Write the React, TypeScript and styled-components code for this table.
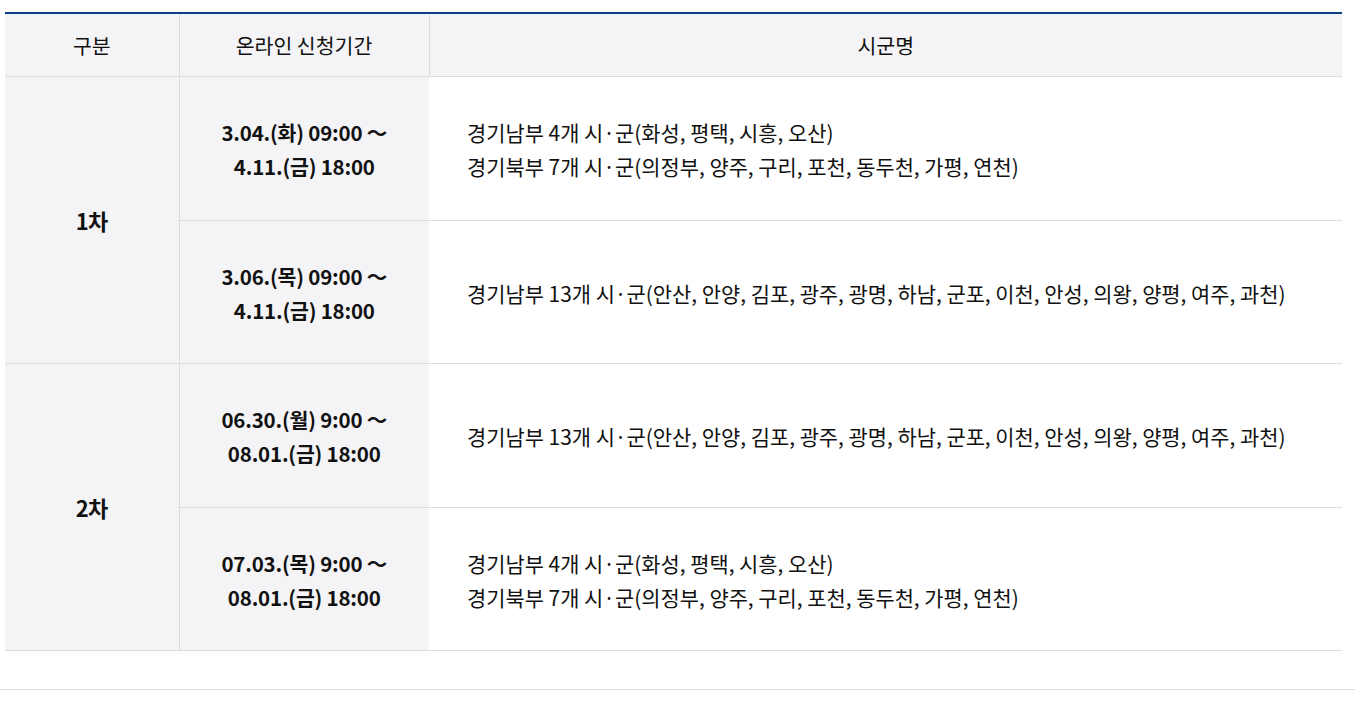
import React from 'react';
import styled, { createGlobalStyle } from 'styled-components';

type Period = {
  start: string;
  end: string;
  regions: string[];
};

type Round = {
  label: string;
  periods: Period[];
};

const SOUTH_4 = '경기남부 4개 시·군(화성, 평택, 시흥, 오산)';
const NORTH_7 = '경기북부 7개 시·군(의정부, 양주, 구리, 포천, 동두천, 가평, 연천)';
const SOUTH_13 =
  '경기남부 13개 시·군(안산, 안양, 김포, 광주, 광명, 하남, 군포, 이천, 안성, 의왕, 양평, 여주, 과천)';

const rounds: Round[] = [
  {
    label: '1차',
    periods: [
      { start: '3.04.(화) 09:00 ～', end: '4.11.(금) 18:00', regions: [SOUTH_4, NORTH_7] },
      { start: '3.06.(목) 09:00 ～', end: '4.11.(금) 18:00', regions: [SOUTH_13] },
    ],
  },
  {
    label: '2차',
    periods: [
      { start: '06.30.(월) 9:00 ～', end: '08.01.(금) 18:00', regions: [SOUTH_13] },
      { start: '07.03.(목) 9:00 ～', end: '08.01.(금) 18:00', regions: [SOUTH_4, NORTH_7] },
    ],
  },
];

const App: React.FC = () => {
  return (
    <Page>
      <GlobalStyle />
      <Table>
        <colgroup>
          <col style={{ width: 174 }} />
          <col style={{ width: 250 }} />
          <col />
        </colgroup>
        <thead>
          <tr>
            <HeadCell>구분</HeadCell>
            <HeadCell>온라인 신청기간</HeadCell>
            <HeadCell last>시군명</HeadCell>
          </tr>
        </thead>
        <tbody>
          {rounds.map((round) =>
            round.periods.map((period, i) => (
              <Row key={round.label + i}>
                {i === 0 && (
                  <RoundCell rowSpan={round.periods.length}>{round.label}</RoundCell>
                )}
                <PeriodCell>
                  {period.start}
                  <br />
                  {period.end}
                </PeriodCell>
                <RegionCell>
                  {period.regions.map((r) => (
                    <div key={r}>{r}</div>
                  ))}
                </RegionCell>
              </Row>
            ))
          )}
        </tbody>
      </Table>
      <Divider />
    </Page>
  );
};

const GlobalStyle = createGlobalStyle`
  body {
    margin: 0;
    background: #fff;
    font-family: "Noto Sans CJK KR", "Noto Sans", sans-serif;
    color: #111;
  }
`;

const Page = styled.div`
  padding-top: 12px;
`;

const Table = styled.table`
  width: 1337px;
  margin-left: 5px;
  border-collapse: collapse;
  table-layout: fixed;
  border-top: 2px solid #0b3f84;
  border-bottom: 1px solid #dcdcdf;
`;

const HeadCell = styled.th<{ last?: boolean }>`
  height: 62px;
  padding: 0;
  background: #f4f4f6;
  font-size: 20.5px;
  font-weight: 400;
  color: #111;
  text-align: center;
  border-bottom: 1px solid #dcdcdf;
  border-right: ${({ last }) => (last ? 'none' : '1px solid #dcdcdf')};
`;

const Row = styled.tr`
  & + & td {
    border-top: 1px solid #dcdcdf;
  }
`;

const RoundCell = styled.td`
  background: #f4f4f6;
  border-right: 1px solid #dcdcdf;
  text-align: center;
  font-size: 22px;
  font-weight: 700;
  letter-spacing: -0.5px;
`;

const PeriodCell = styled.td`
  height: 140.5px;
  padding: 2px 0 0;
  background: #f4f4f6;
  text-align: center;
  font-size: 20.5px;
  font-weight: 700;
  line-height: 34px;
  letter-spacing: -0.2px;
`;

const RegionCell = styled.td`
  padding: 2px 0 0 38px;
  background: #fff;
  font-size: 20.9px;
  line-height: 34px;
`;

const Divider = styled.div`
  margin-top: 38px;
  height: 1px;
  background: #dcdcdf;
`;

export default App;
